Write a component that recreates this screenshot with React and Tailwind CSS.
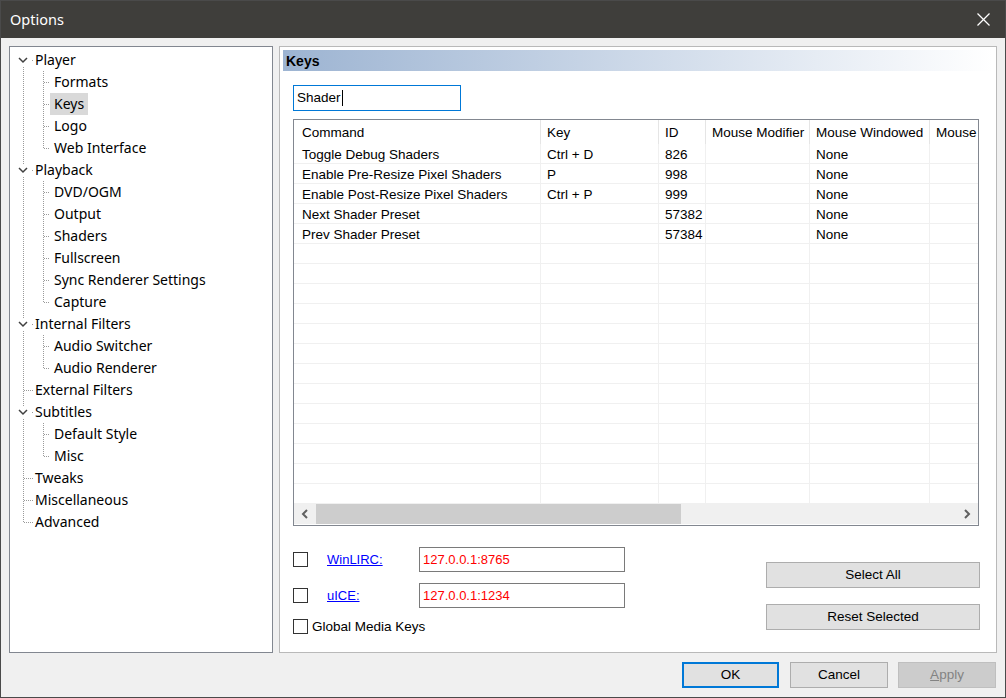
import React from 'react';

const tree = [
  { t: 'Player', l: 0, exp: true, first: true },
  { t: 'Formats', l: 1 },
  { t: 'Keys', l: 1, sel: true },
  { t: 'Logo', l: 1 },
  { t: 'Web Interface', l: 1, last: true },
  { t: 'Playback', l: 0, exp: true },
  { t: 'DVD/OGM', l: 1 },
  { t: 'Output', l: 1 },
  { t: 'Shaders', l: 1 },
  { t: 'Fullscreen', l: 1 },
  { t: 'Sync Renderer Settings', l: 1 },
  { t: 'Capture', l: 1, last: true },
  { t: 'Internal Filters', l: 0, exp: true },
  { t: 'Audio Switcher', l: 1 },
  { t: 'Audio Renderer', l: 1, last: true },
  { t: 'External Filters', l: 0 },
  { t: 'Subtitles', l: 0, exp: true },
  { t: 'Default Style', l: 1 },
  { t: 'Misc', l: 1, last: true },
  { t: 'Tweaks', l: 0 },
  { t: 'Miscellaneous', l: 0 },
  { t: 'Advanced', l: 0, lastTop: true },
];

const dl = { stroke: '#9a9a9a', strokeDasharray: '1 1', strokeWidth: 1 };

function Lines({ item }) {
  if (item.l === 0) {
    return (
      <svg width="25" height="22" className="shrink-0">
        {item.exp ? (
          <>
            {!item.first && <line x1="13.5" y1="0" x2="13.5" y2="6" style={dl} />}
            <line x1="13.5" y1="18" x2="13.5" y2="22" style={dl} />
            <polyline points="9,9 13,13 17,9" fill="none" stroke="#404040" strokeWidth="1.5" />
            <rect x="22" y="11" width="1" height="1" fill="#9a9a9a" />
          </>
        ) : (
          <>
            <line x1="13.5" y1="0" x2="13.5" y2={item.lastTop ? 12 : 22} style={dl} />
            <line x1="14" y1="11.5" x2="24" y2="11.5" style={dl} />
          </>
        )}
      </svg>
    );
  }
  return (
    <svg width="40" height="22" className="shrink-0">
      <line x1="13.5" y1="0" x2="13.5" y2="22" style={dl} />
      <line x1="33.5" y1="0" x2="33.5" y2={item.last ? 12 : 22} style={dl} />
      <line x1="34" y1="11.5" x2="42" y2="11.5" style={dl} />
    </svg>
  );
}

function Tree() {
  return (
    <div className="w-[264px] h-[607px] bg-white border border-[#828790] pt-[2px] font-['Noto_Sans',sans-serif] text-[14px] text-black">
      {tree.map((it) => (
        <div key={it.t + it.l} className="flex h-[22px] items-center">
          <Lines item={it} />
          <span
            className={
              'h-[22px] leading-[22px] whitespace-nowrap ' +
              (it.l === 1 ? 'px-[4px] ' : '') +
              (it.sel ? 'bg-[#d9d9d9]' : '')
            }
          >
            {it.t}
          </span>
        </div>
      ))}
    </div>
  );
}

const cols = [247, 118, 47, 104, 120, 120];
const headers = ['Command', 'Key', 'ID', 'Mouse Modifier', 'Mouse Windowed', 'Mouse'];
const data = [
  ['Toggle Debug Shaders', 'Ctrl + D', '826', '', 'None', ''],
  ['Enable Pre-Resize Pixel Shaders', 'P', '998', '', 'None', ''],
  ['Enable Post-Resize Pixel Shaders', 'Ctrl + P', '999', '', 'None', ''],
  ['Next Shader Preset', '', '57382', '', 'None', ''],
  ['Prev Shader Preset', '', '57384', '', 'None', ''],
];
while (data.length < 18) data.push(['', '', '', '', '', '']);

function Chev({ dir }) {
  return (
    <svg width="8" height="10" viewBox="0 0 8 10">
      <polyline
        points={dir === 'l' ? '6,1 2,5 6,9' : '2,1 6,5 2,9'}
        fill="none"
        stroke="#606060"
        strokeWidth="2"
      />
    </svg>
  );
}

function ListView() {
  return (
    <div className="ml-[13px] mt-[8px] w-[686px] h-[407px] border border-[#828790] bg-white flex flex-col font-['Liberation_Sans',Arial,sans-serif] text-[13.5px] text-black">
      <div className="w-[684px] h-[384px] overflow-hidden">
        <div className="flex h-[24px] w-[756px]">
          {headers.map((h, i) => (
            <div
              key={h}
              style={{ width: cols[i] }}
              className={
                'shrink-0 h-full flex items-center pt-[2px] border-r border-[#e5e5e5] whitespace-nowrap ' +
                (i === 0 ? 'pl-[8px]' : 'pl-[6px]')
              }
            >
              {h}
            </div>
          ))}
        </div>
        {data.map((r, ri) => (
          <div key={ri} className="flex h-[20px] w-[756px] border-b border-[#f0f0f0]">
            {r.map((c, i) => (
              <div
                key={i}
                style={{ width: cols[i] }}
                className={
                  'shrink-0 h-full flex items-center pt-[3px] border-r border-[#f0f0f0] whitespace-nowrap ' +
                  (i === 0 ? 'pl-[8px]' : 'pl-[6px]')
                }
              >
                {c}
              </div>
            ))}
          </div>
        ))}
      </div>
      <div className="flex h-[20px] w-[684px]">
        <div className="w-[22px] h-full bg-[#f0f0f0] flex items-center justify-center">
          <Chev dir="l" />
        </div>
        <div className="w-[365px] h-full bg-[#cdcdcd]" />
        <div className="flex-1 h-full bg-[#f0f0f0]" />
        <div className="w-[22px] h-full bg-[#f0f0f0] flex items-center justify-center">
          <Chev dir="r" />
        </div>
      </div>
    </div>
  );
}

function Box() {
  return <div className="w-[15px] h-[15px] border border-[#333333] bg-white shrink-0" />;
}

function Btn({ children, cls }) {
  return (
    <div
      className={
        'flex items-center justify-center font-["Liberation_Sans",Arial,sans-serif] text-[13.5px] ' + cls
      }
    >
      {children}
    </div>
  );
}

export default function App() {
  return (
    <div className="w-[1006px] h-[698px] border border-[#4a4a4a] bg-[#f0f0f0] flex flex-col overflow-hidden">
      <div className="h-[37px] bg-[#3f3e3b] flex items-center pl-[9px] pr-[15px] shrink-0">
        <span className="font-['Noto_Sans',sans-serif] text-[14.5px] text-white">Options</span>
        <div className="flex-1" />
        <svg width="13" height="13" viewBox="0 0 13 13">
          <line x1="0.5" y1="0.5" x2="12.5" y2="12.5" stroke="#ffffff" strokeWidth="1.2" />
          <line x1="12.5" y1="0.5" x2="0.5" y2="12.5" stroke="#ffffff" strokeWidth="1.2" />
        </svg>
      </div>

      <div className="flex pt-[8px] pl-[8px] gap-[6px]">
        <Tree />
        <div className="w-[718px] h-[607px] bg-white border border-[#b9b9b9] flex flex-col">
          <div className="mx-[3px] mt-[3px] h-[21px] bg-linear-to-r from-[#9db4d2] to-[#ffffff] flex items-center pl-[3px] pt-[1px]">
            <span className="font-['Liberation_Sans',Arial,sans-serif] font-bold text-[14px] text-black">Keys</span>
          </div>
          <div className="ml-[13px] mt-[14px] w-[168px] h-[26px] border border-[#0078d7] bg-white flex items-center pl-[3px] font-['Liberation_Sans',Arial,sans-serif] text-[13.5px] text-black">
            Shader
            <span className="inline-block w-[1px] h-[16px] bg-black ml-[1px]" />
          </div>
          <ListView />
          <div className="flex">
            <div className="ml-[13px] flex flex-col font-['Liberation_Sans',Arial,sans-serif] text-[13.5px]">
              <div className="mt-[21px] h-[25px] flex items-center">
                <Box />
                <div className="w-[111px] pl-[19px] pt-[1px]">
                  <span className="text-[#0000ff] underline text-[13px]">WinLIRC:</span>
                </div>
                <div className="w-[206px] h-[25px] border border-[#7a7a7a] pl-[3px] pt-[2px] text-[#ff0000] text-[13px]">
                  127.0.0.1:8765
                </div>
              </div>
              <div className="mt-[11px] h-[25px] flex items-center">
                <Box />
                <div className="w-[111px] pl-[19px] pt-[1px]">
                  <span className="text-[#0000ff] underline text-[13px]">uICE:</span>
                </div>
                <div className="w-[206px] h-[25px] border border-[#7a7a7a] pl-[3px] pt-[2px] text-[#ff0000] text-[13px]">
                  127.0.0.1:1234
                </div>
              </div>
              <div className="mt-[11px] h-[15px] flex items-center gap-[4px]">
                <Box />
                <span className="text-black pt-[2px]">Global Media Keys</span>
              </div>
            </div>
            <div className="ml-auto mr-[16px] mt-[36px] flex flex-col gap-[16px]">
              <Btn cls="w-[214px] h-[26px] bg-[#e1e1e1] border border-[#adadad] text-black pt-[1px]">Select All</Btn>
              <Btn cls="w-[214px] h-[26px] bg-[#e1e1e1] border border-[#adadad] text-black pt-[1px]">Reset Selected</Btn>
            </div>
          </div>
        </div>
      </div>

      <div className="flex justify-end pr-[9px] mt-[9px]">
        <Btn cls="w-[97px] h-[26px] bg-[#e1e1e1] border-2 border-[#0078d7] text-black mr-[11px] pt-[1px]">OK</Btn>
        <Btn cls="w-[98px] h-[26px] bg-[#e1e1e1] border border-[#adadad] text-black mr-[10px] pt-[1px]">Cancel</Btn>
        <Btn cls="w-[98px] h-[26px] bg-[#cccccc] border border-[#bfbfbf] text-[#838383] pt-[1px]">
          <span>
            <span className="underline">A</span>pply
          </span>
        </Btn>
      </div>
    </div>
  );
}
